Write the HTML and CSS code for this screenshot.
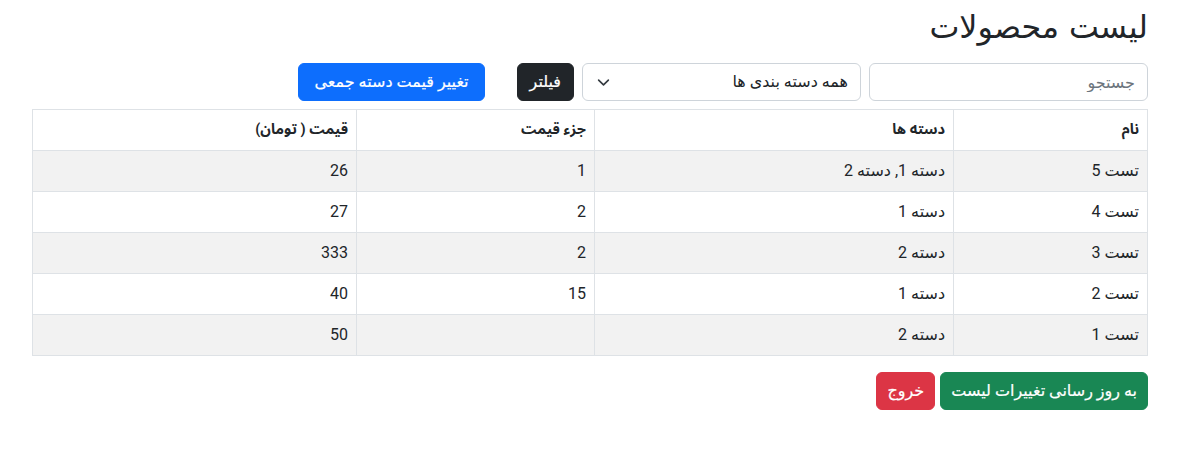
FILE: index.html
```html
<!DOCTYPE html>
<html lang="fa" dir="rtl">
<head>
<meta charset="utf-8">
<title>لیست محصولات</title>
<link rel="stylesheet" href="styles.css">
</head>
<body>
<div class="container">
  <h2 class="title">لیست محصولات</h2>
  <div class="toolbar">
    <input class="field search" type="text" placeholder="جستجو">
    <div class="field select">
      <span>همه دسته بندی ها</span>
      <svg class="chev" width="16" height="16" viewBox="0 0 16 16"><path d="M2 5l6 6 6-6" fill="none" stroke="#343a40" stroke-width="2" stroke-linecap="round" stroke-linejoin="round"/></svg>
    </div>
    <button class="btn btn-dark">فیلتر</button>
    <button class="btn btn-primary bulk">تغییر قیمت دسته جمعی</button>
  </div>
  <table class="table">
    <thead>
      <tr><th class="c1">نام</th><th class="c2">دسته ها</th><th class="c3">جزء قیمت</th><th class="c4">قیمت ( تومان)</th></tr>
    </thead>
    <tbody>
      <tr class="odd"><td>تست 5</td><td>دسته 1, دسته 2</td><td>1</td><td>26</td></tr>
      <tr><td>تست 4</td><td>دسته 1</td><td>2</td><td>27</td></tr>
      <tr class="odd"><td>تست 3</td><td>دسته 2</td><td>2</td><td>333</td></tr>
      <tr><td>تست 2</td><td>دسته 1</td><td>15</td><td>40</td></tr>
      <tr class="odd"><td>تست 1</td><td>دسته 2</td><td></td><td>50</td></tr>
    </tbody>
  </table>
  <div class="actions">
    <button class="btn btn-success">به روز رسانی تغییرات لیست</button>
    <button class="btn btn-danger">خروج</button>
  </div>
</div>
</body>
</html>
```
FILE: styles.css
```css
* { box-sizing: border-box; }
html, body { margin: 0; padding: 0; background: #fff; }
body {
  font-family: Roboto, "DejaVu Sans", sans-serif;
  font-size: 16px;
  line-height: 1.5;
  color: #212529;
}
.container {
  max-width: 1140px;
  margin: 0 auto;
  padding: 8px 12px 0;
}
.title {
  margin: 0 0 17px;
  font-size: 31.8px;
  font-weight: 400;
  line-height: 1.2;
  font-family: "DejaVu Sans", sans-serif;
}
.toolbar {
  display: flex;
  gap: 8px;
  align-items: center;
  margin-bottom: 8px;
}
.field {
  height: 38px;
  width: 279px;
  border: 1px solid #ced4da;
  border-radius: 6px;
  background: #fff;
  font-family: inherit;
  font-size: 16px;
  color: #212529;
  padding: 6px 12px;
}
.search::placeholder { color: #6c757d; }
.select {
  display: flex;
  align-items: center;
  justify-content: space-between;
}
.chev { margin-left: 2px; width: 13px; height: 13px; }
.btn {
  height: 38px;
  border: 1px solid transparent;
  border-radius: 6px;
  padding: 0 12px;
  font-family: Roboto, "DejaVu Sans", sans-serif;
  font-weight: 400;
  font-size: 16px;
  line-height: 1.5;
  color: #fff;
  -webkit-text-stroke: 0.2px #fff;
  cursor: pointer;
}
.btn-dark { background: #212529; border-color: #212529; }
.btn-primary { background: #0d6efd; border-color: #0d6efd; padding: 0 15px; }
.btn-success { background: #198754; border-color: #198754; padding: 0 10px; }
.btn-danger { background: #dc3545; border-color: #dc3545; padding: 0 10px; }
.bulk { margin-right: 24px; }
.table {
  width: 100%;
  border-collapse: collapse;
  margin-bottom: 16px;
}
.table th, .table td {
  border: 1px solid #dee2e6;
  padding: 8px;
  height: 41px;
  text-align: right;
  font-size: 16px;
  vertical-align: middle;
}
.table th {
  font-family: Roboto, "Noto Sans Arabic", sans-serif;
  font-size: 14.5px;
  font-weight: 700;
}
.c1 { width: 194px; }
.c2 { width: 359px; }
.c3 { width: 238px; }
.odd td { background: #f2f2f2; }
.actions { display: flex; gap: 5px; }
```
